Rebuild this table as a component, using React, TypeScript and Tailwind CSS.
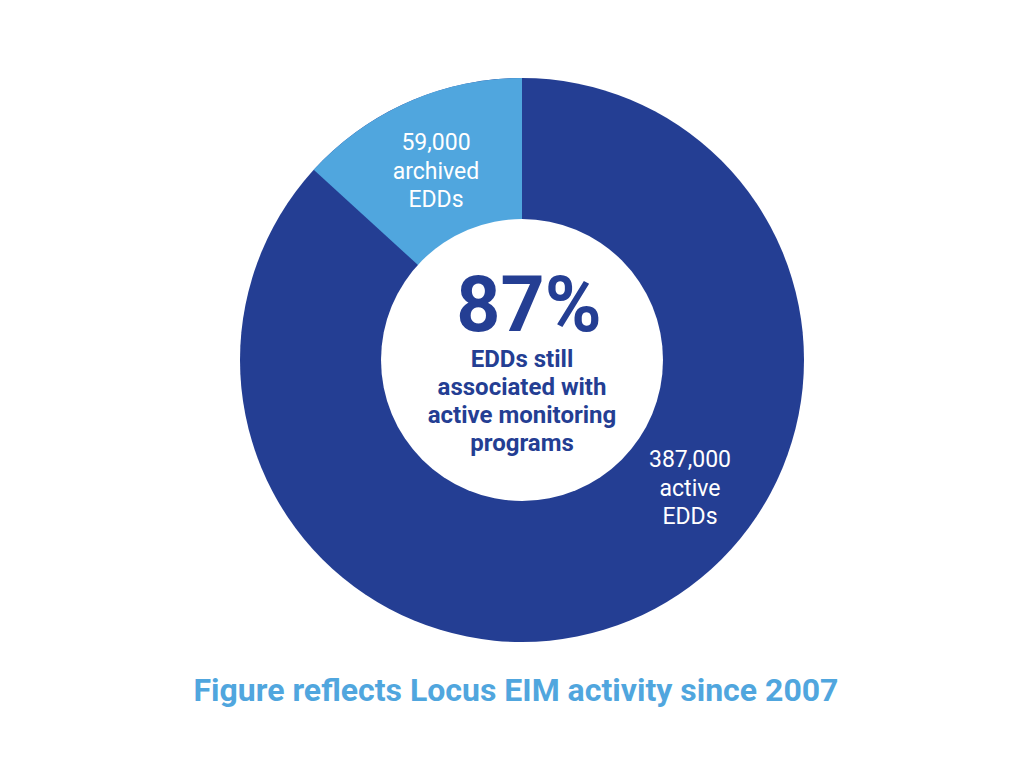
export default function App() {
  const dark = "#243e93"
  const light = "#50a6de"

  return (
    <div className="min-h-screen bg-white flex flex-col items-center pt-[78px] font-['Roboto',sans-serif]">
      {/* Donut chart */}
      <svg width="564" height="564" viewBox="0 0 564 564" className="block ml-[20px]">
        <circle cx="282" cy="282" r="282" fill={dark} />
        <path d="M282 282 L282 0 A282 282 0 0 0 73.7 91.8 Z" fill={light} />
        <circle cx="282" cy="282" r="141" fill="#ffffff" />

        <g fill="#ffffff" fontSize="23" textAnchor="middle" fontFamily="Roboto, sans-serif">
          <text x="196" y="72">59,000</text>
          <text x="196" y="100.5">archived</text>
          <text x="196" y="129">EDDs</text>

          <text x="450" y="389">387,000</text>
          <text x="450" y="417.5">active</text>
          <text x="450" y="446">EDDs</text>
        </g>

        <g fill={dark} textAnchor="middle" fontWeight="700" fontFamily="Roboto, sans-serif">
          <text x="289" y="253" fontSize="77">87%</text>
          <text x="282" y="289" fontSize="24">EDDs still</text>
          <text x="282" y="317" fontSize="24">associated with</text>
          <text x="282" y="345" fontSize="24">active monitoring</text>
          <text x="282" y="373" fontSize="24">programs</text>
        </g>
      </svg>

      <p className="mt-[29px] ml-[8px] text-[32px] leading-[38px] font-bold text-[#50a6de]">
        Figure reflects Locus EIM activity since 2007
      </p>
    </div>
  )
}
